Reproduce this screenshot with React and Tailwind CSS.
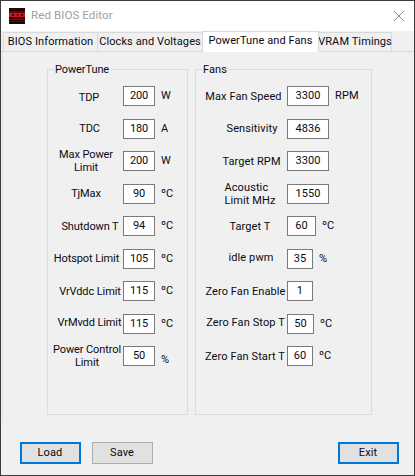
const powerTune = [
  { label: "TDP", value: "200", unit: "W", pos: "pl-[7px] pt-[2px]" },
  { label: "TDC", value: "180", unit: "A", pos: "pl-[8px]" },
  { label: "Max Power\nLimit", value: "200", unit: "W", pos: "pl-[1px]" },
  { label: "TjMax", value: "90", unit: "ºC", pos: "pl-[1px]" },
  { label: "Shutdown T", value: "94", unit: "ºC", pos: "pl-[9px]" },
  { label: "Hotspot Limit", value: "105", unit: "ºC", pos: "pl-[2px]" },
  { label: "VrVddc Limit", value: "115", unit: "ºC", pos: "pl-[9px]" },
  { label: "VrMvdd Limit", value: "115", unit: "ºC", pos: "pl-[8px] pb-[3px]" },
  { label: "Power Control\nLimit", value: "50", unit: "%", pos: "pl-[3px]", unitPos: "mt-[7px]" },
];

const fans = [
  { label: "Max Fan Speed", value: "3300", unit: "RPM", pos: "pl-[4px]", w: "w-[42px]" },
  { label: "Sensitivity", value: "4836", pos: "pl-[21px]", w: "w-[42px]" },
  { label: "Target RPM", value: "3300", pos: "pl-[20px]", w: "w-[42px]" },
  { label: "Acoustic\nLimit MHz", value: "1550", pos: "pl-[17px] text-left", w: "w-[42px]" },
  { label: "Target T", value: "60", unit: "ºC", pos: "pl-[17px]", w: "w-[29px]" },
  { label: "idle pwm", value: "35", unit: "%", pos: "pl-[19px] pb-[3px]", w: "w-[26px]" },
  { label: "Zero Fan Enable", value: "1", pos: "pl-[8px]", w: "w-[26px]" },
  { label: "Zero Fan Stop T", value: "50", unit: "ºC", pos: "pl-[8px] pb-[3px]", w: "w-[27px]" },
  { label: "Zero Fan Start T", value: "60", unit: "ºC", pos: "pl-[7px]", w: "w-[26px]" },
];

function Row({ label, value, unit, w = "w-[32px]", pos, unitPos = "", box }) {
  return (
    <div className="flex h-[32.5px] items-center">
      <div className={`${box} ${pos} flex justify-center`}>
        <div className={`${pos.includes("text-left") ? "text-left" : "text-center"} whitespace-pre leading-[13px]`}>{label}</div>
      </div>
      <div className={`${w} flex h-[20px] shrink-0 items-center justify-center border border-[#7a7a7a] bg-white`}>
        {value}
      </div>
      {unit && <div className={`ml-[6px] ${unitPos}`}>{unit}</div>}
    </div>
  );
}

function Group({ title, className, children }) {
  return (
    <div className={`relative h-[346px] border border-[#dcdcdc] pt-[10px] ${className}`}>
      <div className="absolute left-[6px] top-[-8px] bg-[#f0f0f0] px-[1px] leading-[16px]">{title}</div>
      {children}
    </div>
  );
}

function Tab({ children, active, className }) {
  if (active) {
    return (
      <div className={`z-10 mb-[-1px] flex h-[21px] items-center justify-center self-end whitespace-nowrap border border-b-0 border-[#d9d9d9] bg-white pb-[2px] ${className}`}>
        {children}
      </div>
    );
  }
  return (
    <div className={`flex h-[19px] items-center justify-center self-end whitespace-nowrap border border-b-0 border-[#d9d9d9] bg-[#f0f0f0] pt-[1px] ${className}`}>
      {children}
    </div>
  );
}

function Button({ children, focused }) {
  return (
    <div
      className={`flex h-[22px] w-[61px] items-center justify-center bg-[#e1e1e1] pr-[1px] ${
        focused ? "border-[2px] border-[#0078d7]" : "border border-[#adadad]"
      }`}
    >
      {children}
    </div>
  );
}

export default function App() {
  return (
    <div className="flex h-[476px] w-[415px] flex-col border-x border-b border-t border-[#3c3c3c] bg-[#f0f0f0] font-['Roboto',sans-serif] text-[11px] tracking-[0.1px] text-[#0a0a14]">
      <div className="flex h-[30px] items-center bg-white pl-[8px]">
        <svg width="16" height="16" viewBox="0 0 16 16" className="shrink-0">
          <rect width="16" height="16" fill="#2a0205" />
          <rect y="3" width="16" height="2" fill="#5c0a10" />
          <rect y="5" width="16" height="4" fill="#d1121c" />
          <rect x="3" y="6" width="2" height="2" fill="#2a0205" />
          <rect x="8" y="6" width="1" height="2" fill="#2a0205" />
          <rect x="12" y="6" width="2" height="2" fill="#2a0205" />
          <rect y="11" width="16" height="1" fill="#7a0c12" />
          <rect y="13" width="16" height="1" fill="#5c0a10" />
        </svg>
        <div className="ml-[6px] text-[11.5px] text-[#a0a0a0]">Red BIOS Editor</div>
        <svg width="10" height="10" viewBox="0 0 10 10" className="ml-auto mr-[10px]">
          <path d="M0 0L10 10M10 0L0 10" stroke="#8c8c8c" strokeWidth="1" fill="none" />
        </svg>
      </div>

      <div className="flex h-[21px] items-end border-b border-[#d9d9d9] pl-[2px] pr-[17px]">
        <Tab className="w-[95px]">BIOS Information</Tab>
        <Tab className="ml-[-1px] w-[106px]">Clocks and Voltages</Tab>
        <Tab active className="ml-[-1px] w-[117px]">PowerTune and Fans</Tab>
        <Tab className="ml-[-1px] w-[74px]">VRAM Timings</Tab>
      </div>

      <div className="ml-[1px] flex h-[370px] items-start gap-[7px] border-l border-[#e3e3e3] pl-[44px] pt-[17px]">
        <Group title="PowerTune" className="w-[141px] tracking-[-0.1px]">
          {powerTune.map((row) => (
            <Row key={row.label} {...row} box="w-[75px]" />
          ))}
        </Group>
        <Group title="Fans" className="w-[177px]">
          {fans.map((row) => (
            <Row key={row.label} {...row} box="w-[91px]" />
          ))}
        </Group>
      </div>

      <div className="flex flex-1 items-start gap-[11px] pl-[19px] pr-[15px] pt-[20px]">
        <Button focused>Load</Button>
        <Button>Save</Button>
        <div className="ml-auto">
          <Button focused>Exit</Button>
        </div>
      </div>
    </div>
  );
}
